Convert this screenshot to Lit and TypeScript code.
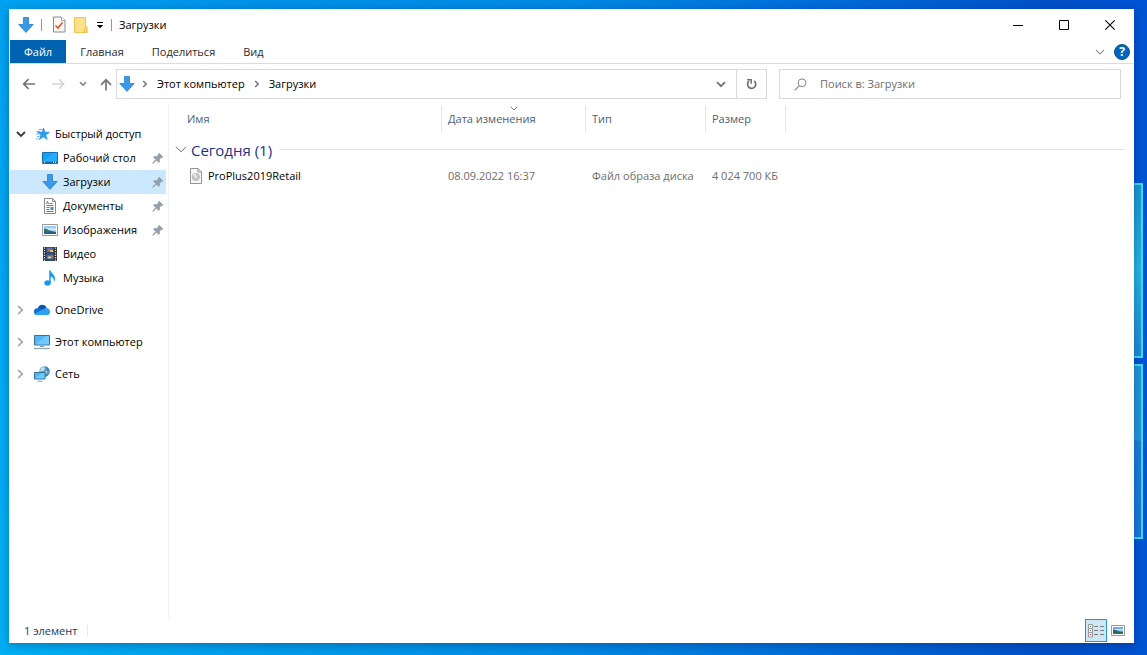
import { LitElement, html, css, svg } from "lit";
import { customElement, property } from "lit/decorators.js";
import { classMap } from "lit/directives/class-map.js";

const frame = (w: number, h: number, body: unknown) => html`<svg
  class="icon"
  width=${w}
  height=${h}
  viewBox="0 0 ${w} ${h}"
  aria-hidden="true"
>${body}</svg>`;

const icons: Record<string, () => unknown> = {
  download: () => frame(16, 16, svg`
    <path d="M5.5.5h5v7h4.700L8 15.400.8 7.500h4.700z" fill="#3a99e8" stroke="#2a7fcb" stroke-width=".8"/>`),
  properties: () => frame(14, 17, svg`
    <path d="M1.500 1h8l3.500 3.500V16H1.500z" fill="#f7f7f7" stroke="#8a8a8a"/>
    <path d="M9.500 1v3.500H13" fill="#fff" stroke="#8a8a8a" stroke-width=".8"/>
    <path d="M3.500 9.500l2.500 2.500 4.500-5.500" fill="none" stroke="#e8501e" stroke-width="1.600"/>`),
  folder: () => frame(14, 16, svg`
    <path d="M.5.500h11v9.500h1.500v5.500H.5z" fill="#ffe08a" stroke="#efc552"/>
    <path d="M10.500 15V11.500l1-1.500h1.500v5.500z" fill="#ffd869" stroke="#e8ba42" stroke-width=".7"/>`),
  customize: () => frame(8, 8, svg`
    <path d="M1 1.500h6" stroke="#000"/><path d="M.8 4h6.400L4 7.200z" fill="#000"/>`),
  minimize: () => frame(10, 10, svg`<path d="M0 5.500h10" stroke="#000"/>`),
  maximize: () => frame(10, 10, svg`<path d="M.5.500h9v9h-9z" fill="none" stroke="#000"/>`),
  close: () => frame(10, 10, svg`<path d="M.3.300l9.400 9.400M9.700.3L.3 9.700" stroke="#000" stroke-width="1.100"/>`),
  collapse: () => frame(10, 6, svg`<path d="M1 1l4 4 4-4" fill="none" stroke="#999" stroke-width="1.200"/>`),
  back: () => frame(14, 12, svg`<path d="M13 6H2M6.500 1.200L1.700 6l4.800 4.800" fill="none" stroke="#737373" stroke-width="1.700"/>`),
  forward: () => frame(14, 12, svg`<path d="M0 6h11.500M7 1.200L11.800 6 7 10.800" fill="none" stroke="#d4d4d4" stroke-width="1.500"/>`),
  recent: () => frame(8, 6, svg`<path d="M1 1.200l3 3 3-3" fill="none" stroke="#808080" stroke-width="1.600"/>`),
  up: () => frame(12, 13, svg`<path d="M6 12.500V2M1 6.800l5-5 5 5" fill="none" stroke="#757575" stroke-width="1.700"/>`),
  crumb: () => frame(6, 8, svg`<path d="M1.200 1l3 3-3 3" fill="none" stroke="#737373" stroke-width="1.500"/>`),
  drop: () => frame(10, 7, svg`<path d="M1 1.200l4 4 4-4" fill="none" stroke="#757575" stroke-width="1.900"/>`),
  refresh: () => frame(11, 12, svg`
    <path d="M8.200 3A4.100 4.100 0 1 1 3 3.100" fill="none" stroke="#707070" stroke-width="1.700"/>
    <path d="M1 1.700h4.200v4" fill="none" stroke="#707070" stroke-width="1.500"/>`),
  search: () => frame(13, 13, svg`
    <circle cx="8" cy="4.800" r="3.900" fill="none" stroke="#858585"/>
    <path d="M5.200 7.800L.6 12.400" stroke="#858585" stroke-width="1.200"/>`),
  open: () => frame(10, 7, svg`<path d="M1 1l4 4 4-4" fill="none" stroke="#3c3c3c" stroke-width="1.900"/>`),
  closed: () => frame(7, 10, svg`<path d="M1.200 1l4 4-4 4" fill="none" stroke="#a3a3a3" stroke-width="1.700"/>`),
  star: () => frame(16, 16, svg`
    <path d="M9.600 2l1.300 4.200 4.600.1-3.800 2.700 1.500 4.500-3.800-2.700-4 2.700L7 9.100 3.500 6.300h4.600z" fill="#27a0ee" stroke="#1485d6" stroke-width=".6"/>
    <path d="M4.500 3.500h4M2.500 5.500h4M2 8h3.500M3 10.500h2.500M2 13h2.500" stroke="#4ab4f5" stroke-width=".9"/>`),
  desktop: () => frame(16, 16, svg`
    <path d="M.5 2.500h15v11H.5z" fill="#16a0f6" stroke="#1470b4"/>
    <path d="M1 11L12 3h3v8.500H1z" fill="#3bb4ff" opacity=".55"/>
    <path d="M1 12.400h14" stroke="#0a5f9e"/><path d="M2 12.400h1M11 12.400h1M13 12.400h1" stroke="#fff"/>`),
  documents: () => frame(16, 16, svg`
    <path d="M2.500.5h8l3 3v12h-11z" fill="#fff" stroke="#8a8a8a"/>
    <path d="M10.500.5v3h3" fill="none" stroke="#8a8a8a"/>
    <path d="M7.500 5.500h3M4.500 7.500h7" stroke="#2b8fd6"/>
    <path d="M4.500 6l1-2.500 1 2.500M4.500 9.500h3M4.500 11.500h3M4.500 13.500h7" stroke="#44709a" stroke-width=".9" fill="none"/>
    <path d="M8.500 9h3v3h-3z" fill="#2b8fd6"/>`),
  pictures: () => frame(16, 16, svg`
    <path d="M.5 2.500h15v11H.5z" fill="#fff" stroke="#9a9a9a"/>
    <path d="M2 4h12v8H2z" fill="#9bcdf5"/><path d="M2 6.500h12v1.500H2z" fill="#e1f0fb"/>
    <path d="M2 6.500c3 0 5 2.500 12 3.500v2H2z" fill="#386e68"/><path d="M2 10.500c4-.500 8 0 12-.5v2H2z" fill="#285d92"/>`),
  video: () => frame(16, 16, svg`
    <path d="M1 1h14v14H1z" fill="#343434"/>
    <path d="M2.500 1.500v14M13.500 1.500v14" stroke="#e4e4e4" stroke-width="1.200" stroke-dasharray="1.200 1.200"/>
    <path d="M4.500 1.500h7v6h-7zM4.500 8.500h7v6h-7z" fill="#3c73cc"/>
    <path d="M6 2.500h2v2H6zM9 9.500h2v2H9z" fill="#e8604a"/><path d="M8 4h3v2H8zM6 10.500h3v2H6z" fill="#f0c840"/>
    <path d="M4.500 6.500h7M4.500 13.500h7" stroke="#274479"/>`),
  music: () => frame(16, 16, svg`
    <ellipse cx="5.500" cy="12.900" rx="3.200" ry="2.600" fill="#149bf1"/>
    <path d="M7.200.5h1.500c.3 3 4.800 4 4.300 9-.1.900-.6 1.800-1.100 2.300.4-3-1-4.600-3.200-5.300v6.500H7.200z" fill="#149bf1"/>`),
  onedrive: () => frame(16, 16, svg`
    <path d="M3.600 6.400C4.600 3.800 6.500 2.800 8.300 2.800c2 0 3.600 1.200 4.200 3.200L10 9 4 8z" fill="#0a55b4"/>
    <path d="M3.300 13A3.300 3.300 0 0 1 3.400 6.200c1.600-.3 3 .2 4.200 1l3.800 2.500L6 13z" fill="#1272cc"/>
    <path d="M.8 11.500l9.400-4.800c2-1.500 5.800-.4 5.800 3A3.100 3.100 0 0 1 13 13H3.300C2.200 13 1.300 12.400.8 11.500z" fill="#2b9ff0"/>`),
  computer: () => frame(16, 16, svg`
    <path d="M.5 1.500h15v9.500H.5z" fill="#4fb6f4" stroke="#3d6f94"/>
    <path d="M1 10.500L12 2h3v8.500z" fill="#82d2ff" opacity=".65"/>
    <path d="M6 12.500h4" stroke="#8495a2"/><path d="M0 14.500h16" stroke="#8fa5b5" stroke-width="1.300"/>`),
  network: () => frame(16, 16, svg`
    <circle cx="10.500" cy="5.500" r="5.200" fill="#5fa5cc"/>
    <path d="M7 2.500l3-1.700 1 2-2 2-3 .7zM11.500 5l3-.5.500 2-2 2.500z" fill="#c5e5ee"/>
    <path d="M10.500.3a5.200 5.200 0 0 1 0 10.400c3-3 3-7 0-10.400z" fill="#2b6f9d" opacity=".6"/>
    <path d="M.5 6.500h10.500V13H.5z" fill="#4db8f5" stroke="#316f9c"/>
    <path d="M1 12.500L8.500 7h2v5.500z" fill="#8ad6ff" opacity=".6"/><path d="M3.500 15.200h5" stroke="#879bab"/>`),
  pin: () => frame(12, 12, svg`
    <path d="M7 1l4 4-1.200.7-.5-.2-1.800 1.900.2 2.300-1.100.8L4.500 8.300 1 11.500.6 11.100 3.700 7.500 1.500 5.300l.9-1 2.300.2 1.800-1.800L6.300 2z" fill="#93a0ab" stroke="#93a0ab" stroke-width=".6"/>`),
  disc: () => frame(14, 16, svg`
    <path d="M1.500.5h7.500l3.500 3.500v11.500h-11z" fill="#f8f8f8" stroke="#959595"/>
    <path d="M9 .5V4h3.500" fill="none" stroke="#959595"/>
    <circle cx="6.800" cy="9" r="3.700" fill="#c3c5c8" stroke="#aeb1b4" stroke-width=".6"/>
    <path d="M4 7.500a3.300 3.300 0 0 1 3-2l-.2 3.500z" fill="#e9eaeb"/><circle cx="6.800" cy="9" r="1" fill="#f6f6f6"/>`),
  group: () => frame(12, 7, svg`<path d="M1 .8l5 5 5-5" fill="none" stroke="#666"/>`),
  sort: () => frame(8, 5, svg`<path d="M.7.700L4 4 7.300.7" fill="none" stroke="#808080"/>`),
  details: () => frame(18, 14, svg`
    <path d="M.5.500h4v12.500h-4zM.5 4.500h4M.5 8.500h4" fill="#fff" stroke="#999"/>
    <path d="M2 2.500h1.200" stroke="#447744" stroke-width="1.200"/><path d="M2 6.500h1.200" stroke="#3768dc" stroke-width="1.200"/><path d="M2 10.500h1.200" stroke="#d03030" stroke-width="1.200"/>
    <path d="M6 2.500h4M12 2.500h4M6 6.500h4M12 6.500h4M6 10.500h4M12 10.500h4" stroke="#7d7d7d"/>`),
  thumbs: () => frame(14, 11, svg`
    <path d="M.5.500h13v10H.5z" fill="#fff" stroke="#999"/><path d="M2 2h10v7H2z" fill="#6aaef2"/>
    <path d="M2 4h10v1.500H2z" fill="#cfe6f8"/><path d="M2 4.500c3 0 5 2 10 2.500v2H2z" fill="#2f6660"/><path d="M2 8h10v1H2z" fill="#32639e"/>`),
};

const base = css`
  * { box-sizing: border-box; }
  .icon { display: block; flex: none; }
  button {
    font: inherit; color: inherit; background: none; border: 0; padding: 0; margin: 0;
    display: flex; align-items: center; justify-content: center;
  }
  a { color: inherit; text-decoration: none; }
`;

@customElement("title-bar")
class TitleBar extends LitElement {
  static styles = [base, css`
    :host { display: flex; align-items: center; height: 31px; padding-left: 8px; }
    .sep { width: 1px; height: 12px; background: #999; }
    .quick { display: flex; align-items: center; gap: 7px; }
    .tools { display: flex; align-items: center; gap: 8px; padding-left: 3px; }
    h1 { font: inherit; margin: 0; color: #000; }
    .controls { display: flex; align-self: stretch; margin-left: auto; }
    .controls button { width: 46px; }
  `];
  render() {
    return html`
      <div class="quick">
        ${icons.download()}<span class="sep"></span>
        <div class="tools">
          <button aria-label="Свойства">${icons.properties()}</button>
          <button aria-label="Новая папка">${icons.folder()}</button>
          <button aria-label="Настройка панели">${icons.customize()}</button>
        </div>
        <span class="sep"></span>
        <h1>Загрузки</h1>
      </div>
      <div class="controls">
        <button aria-label="Свернуть">${icons.minimize()}</button>
        <button aria-label="Развернуть">${icons.maximize()}</button>
        <button aria-label="Закрыть">${icons.close()}</button>
      </div>`;
  }
}

@customElement("ribbon-tabs")
class RibbonTabs extends LitElement {
  static styles = [base, css`
    :host { display: flex; height: 24px; border-bottom: 1px solid #dadbdc; color: #2b2b2b; }
    .tab { padding: 0 14px; }
    .file { background: #0063b1; color: #fff; }
    .side { display: flex; align-items: center; gap: 9px; margin-left: auto; padding-right: 3px; }
    .help {
      width: 16px; height: 16px; border-radius: 50%; background: #0067c0;
      border: 1px solid #15508a; color: #fff; font-size: 12px; font-weight: 700;
    }
  `];
  render() {
    return html`
      <button class="tab file">Файл</button>
      <button class="tab">Главная</button>
      <button class="tab">Поделиться</button>
      <button class="tab">Вид</button>
      <div class="side">
        <button aria-label="Развернуть ленту">${icons.collapse()}</button>
        <button class="help">?</button>
      </div>`;
  }
}

@customElement("address-bar")
class AddressBar extends LitElement {
  static styles = [base, css`
    :host { display: flex; gap: 12px; padding: 5px 12px 6px 0; }
    .history { display: flex; flex: none; align-items: center; padding-left: 12px; width: 106px; gap: 16px; }
    .history .recent { margin: 0 -3px; }
    .place { display: flex; flex: 1; min-width: 0; }
    .box { display: flex; flex: 1; min-width: 0; height: 30px; border: 1px solid #d9d9d9; }
    .path { display: flex; flex: 1; align-items: center; gap: 9px; padding-left: 2px; color: #000; min-width: 0; white-space: nowrap; }
    .path .icon + .icon { margin-left: -2px; }
    .drop { width: 30px; }
    .refresh { width: 30px; border-left: 1px solid #d9d9d9; }
    .search { display: flex; flex: 0 1 342px; align-items: center; gap: 13px; padding-left: 14px; border: 1px solid #d9d9d9; }
    input { flex: 1; min-width: 0; border: 0; padding: 0; font: inherit; color: #000; background: none; outline: 0; }
    input::placeholder { color: #6d6d6d; opacity: 1; }
  `];
  render() {
    return html`
      <div class="place">
        <div class="history">
          <button aria-label="Назад">${icons.back()}</button>
          <button aria-label="Вперёд">${icons.forward()}</button>
          <button class="recent" aria-label="Последние расположения">${icons.recent()}</button>
          <button aria-label="Вверх">${icons.up()}</button>
        </div>
        <div class="box">
          <div class="path">
            ${icons.download()}${icons.crumb()}
            <a href="#computer">Этот компьютер</a>${icons.crumb()}
            <a href="#downloads">Загрузки</a>
          </div>
          <button class="drop" aria-label="Предыдущие расположения">${icons.drop()}</button>
          <button class="refresh" aria-label="Обновить">${icons.refresh()}</button>
        </div>
      </div>
      <label class="search">
        ${icons.search()}
        <input type="text" aria-label="Поиск в: Загрузки" placeholder="Поиск в: Загрузки" />
      </label>`;
  }
}

interface Place { name: string; icon: string; pinned?: boolean; selected?: boolean; }
interface Root extends Place { open?: boolean; children?: Place[]; }

const tree: Root[] = [
  {
    name: "Быстрый доступ", icon: "star", open: true,
    children: [
      { name: "Рабочий стол", icon: "desktop", pinned: true },
      { name: "Загрузки", icon: "download", pinned: true, selected: true },
      { name: "Документы", icon: "documents", pinned: true },
      { name: "Изображения", icon: "pictures", pinned: true },
      { name: "Видео", icon: "video" },
      { name: "Музыка", icon: "music" },
    ],
  },
  { name: "OneDrive", icon: "onedrive" },
  { name: "Этот компьютер", icon: "computer" },
  { name: "Сеть", icon: "network" },
];

@customElement("nav-tree")
class NavTree extends LitElement {
  static styles = [base, css`
    :host { display: block; width: 159px; flex: none; padding: 17px 2px 0 0; border-right: 1px solid #f0f0f0; color: #000; }
    ul { list-style: none; margin: 0; padding: 0; }
    .roots { display: flex; flex-direction: column; gap: 8px; }
    .row { display: flex; align-items: center; height: 24px; gap: 3px; white-space: nowrap; }
    .row button { width: 21px; height: 24px; }
    .link { display: flex; align-items: center; gap: 5px; height: 24px; flex: 1; }
    .child { padding: 0 2px 0 32px; }
    .child .name { flex: 1; }
    .selected { background: #cce8ff; }
  `];
  render() {
    return html`<ul class="roots">${tree.map((r) => html`
      <li>
        <div class="row">
          <button aria-label="Развернуть ${r.name}">${r.open ? icons.open() : icons.closed()}</button>
          <a class="link" href="#">${icons[r.icon]()}<span>${r.name}</span></a>
        </div>
        ${r.children ? html`<ul>${r.children.map((c) => html`
          <li><a href="#" class=${classMap({ link: true, child: true, selected: !!c.selected })}>
            ${icons[c.icon]()}<span class="name">${c.name}</span>${c.pinned ? icons.pin() : ""}
          </a></li>`)}</ul>` : ""}
      </li>`)}</ul>`;
  }
}

@customElement("file-list")
class FileList extends LitElement {
  @property({ attribute: false }) files = [
    { name: "ProPlus2019Retail", date: "08.09.2022 16:37", type: "Файл образа диска", size: "4 024 700 КБ" },
  ];
  static styles = [base, css`
    :host { display: block; flex: 1; min-width: 0; padding: 1px 8px 0 0; }
    table { width: 100%; table-layout: fixed; border-collapse: separate; border-spacing: 0; text-align: left; white-space: nowrap; }
    th, td { padding: 0; font-weight: 400; }
    .c-name { width: 272px; } .c-date { width: 144px; } .c-type { width: 120px; } .c-size { width: 80px; }
    thead th { position: relative; height: 26px; padding-left: 6px; color: #4c607a; border-left: 1px solid #e5e5e5; }
    thead th:first-child { border-left: 0; padding-left: 18px; }
    .sort { position: absolute; top: 0; left: 0; right: 0; display: flex; justify-content: center; }
    .group { display: flex; align-items: center; gap: 4px; height: 35px; padding-left: 6px; font-size: 15px; color: #1e3287; }
    .group::after { content: ""; flex: 1; height: 1px; margin-left: 3px; background: #e2e2e2; }
    tbody td { height: 18px; padding-left: 7px; color: #6d6d6d; }
    tbody td:first-child { padding-left: 20px; color: #000; }
    tbody td:nth-child(4) { text-align: right; padding: 0 7px 0 0; }
    .file { display: flex; align-items: center; gap: 5px; }
  `];
  render() {
    return html`<table>
      <colgroup><col class="c-name" /><col class="c-date" /><col class="c-type" /><col class="c-size" /><col /></colgroup>
      <thead><tr>
        <th scope="col">Имя</th>
        <th scope="col" aria-sort="descending"><span class="sort">${icons.sort()}</span>Дата изменения</th>
        <th scope="col">Тип</th><th scope="col">Размер</th><th></th>
      </tr></thead>
      <tbody>
        <tr><th colspan="5" scope="rowgroup"><div class="group">${icons.group()}<span>Сегодня (1)</span></div></th></tr>
        ${this.files.map((f) => html`<tr>
          <td><div class="file">${icons.disc()}<span>${f.name}</span></div></td>
          <td>${f.date}</td><td>${f.type}</td><td>${f.size}</td><td></td>
        </tr>`)}
      </tbody>
    </table>`;
  }
}

@customElement("status-bar")
class StatusBar extends LitElement {
  static styles = [base, css`
    :host { display: flex; align-items: center; height: 25px; padding: 0 8px 0 14px; color: #1e395b; }
    .count { padding-right: 10px; border-right: 1px solid #e8e8e8; line-height: 12px; }
    .views { display: flex; gap: 4px; margin-left: auto; }
    .details { width: 22px; height: 23px; padding-left: 2px; background: #cce8f6; border: 1px solid #2695d0; }
  `];
  render() {
    return html`
      <span class="count">1 элемент</span>
      <div class="views">
        <button class="details" aria-label="Таблица" aria-pressed="true">${icons.details()}</button>
        <button aria-label="Крупные эскизы" aria-pressed="false">${icons.thumbs()}</button>
      </div>`;
  }
}

@customElement("app-root")
class AppRoot extends LitElement {
  static styles = [base, css`
    :host {
      display: flex; position: relative; overflow: hidden; min-height: 100vh; box-sizing: border-box;
      padding: 9px 13px 12px 9px;
      font: 11px/16px "Open Sans", "Noto Sans", sans-serif;
      background:
        radial-gradient(ellipse 50% 100% at 0 100%, rgba(0, 190, 245, .5), rgba(0, 190, 245, 0)),
        linear-gradient(to right, #00a2f0 0%, #0093ea 20%, #0089e4 50%, #0068d8 75%, #0050c8 92%, #0054d4 100%);
    }
    .pane {
      position: absolute; right: 4px; width: 60px; height: 175px;
      background: linear-gradient(to bottom, #1a95d4, #26b4e2 50%, #1c8cd8);
      border: 2px solid #3cdcec;
    }
    .upper { top: 183px; }
    .lower { top: 364px; background: linear-gradient(to bottom, #1c98dc, #2196dc 43%, #1a7fd8 44%, #1878dc); }
    .window {
      position: relative; display: flex; flex-direction: column; flex: 1; min-width: 0;
      background: #fff; padding: 0 1px; box-shadow: 0 2px 9px rgba(0, 20, 70, .35);
    }
    .body { display: flex; flex: 1; }
  `];
  render() {
    return html`
      <div class="pane upper"></div>
      <div class="pane lower"></div>
      <main class="window">
        <title-bar></title-bar>
        <ribbon-tabs></ribbon-tabs>
        <address-bar></address-bar>
        <div class="body">
          <nav-tree></nav-tree>
          <file-list></file-list>
        </div>
        <status-bar></status-bar>
      </main>`;
  }
}
